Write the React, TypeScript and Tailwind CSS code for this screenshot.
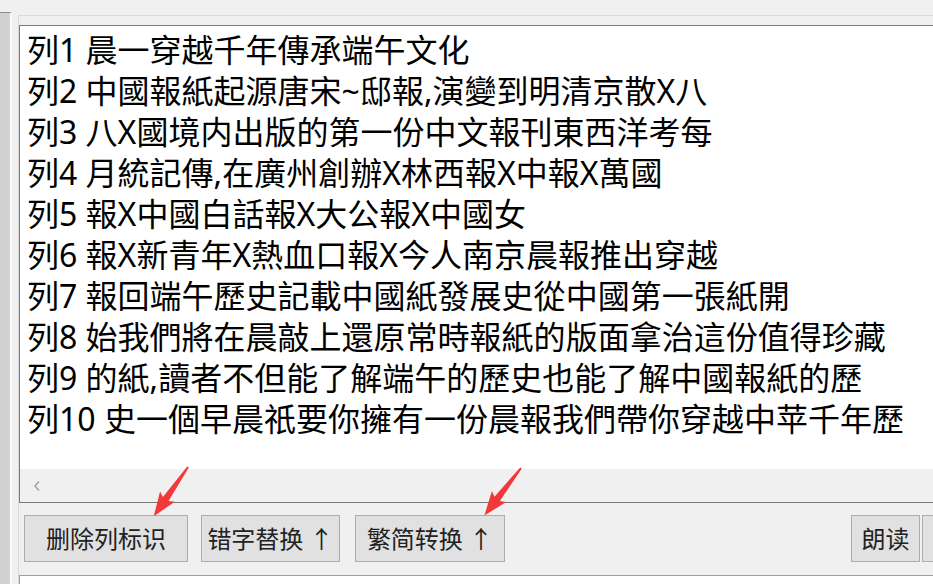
import React from 'react';

const lines = [
  '列1 晨一穿越千年傳承端午文化',
  '列2 中國報紙起源唐宋~邸報,演變到明清京散X八',
  '列3 八X國境内出版的第一份中文報刊東西洋考每',
  '列4 月統記傳,在廣州創辦X林西報X中報X萬國',
  '列5 報X中國白話報X大公報X中國女',
  '列6 報X新青年X熱血口報X今人南京晨報推出穿越',
  '列7 報回端午歷史記載中國紙發展史從中國第一張紙開',
  '列8 始我們將在晨敲上還原常時報紙的版面拿治這份值得珍藏',
  '列9 的紙,讀者不但能了解端午的歷史也能了解中國報紙的歷',
  '列10 史一個早晨祇要你擁有一份晨報我們帶你穿越中苹千年歷',
];

function Arrow({ x, y, angle }: { x: number; y: number; angle: number }) {
  return (
    <g transform={`translate(${x} ${y}) rotate(${angle})`}>
      <polygon
        points="0,-1 39,-3.4 36,-9 60,0 36,9 39,3.4 0,1"
        fill="#f2383b"
      />
    </g>
  );
}

export default function App() {
  return (
    <div className="relative w-[933px] h-[584px] overflow-hidden bg-[#f0f0f0] flex font-['Noto_Sans','Noto_Sans_CJK_SC',sans-serif]">
      {/* left splitter strip */}
      <div className="w-[12px] shrink-0 pt-[12px]">
        <div className="h-full border-t border-[#8c8c8c] bg-[#d2d2d2] border-r-2 border-r-[#f9f9f9]" />
      </div>

      <div className="flex-1 min-w-0 pl-[6px] pt-[15px] flex flex-col">
        <div className="flex-1 flex flex-col border-t border-l border-[#dadada] pt-[9px]">
          {/* text box */}
          <div className="h-[478px] shrink-0 flex flex-col border border-r-0 border-[#7a7a7a]">
            <div className="flex-1 bg-white pl-[7px] pt-[3px] overflow-hidden">
              {lines.map((l) => (
                <div key={l} className="text-[32px] leading-[41px] text-black whitespace-nowrap">
                  {l}
                </div>
              ))}
            </div>
            <div className="h-[33px] bg-[#f0f0f0] flex items-center pl-[13px]">
              <svg width="8" height="12" viewBox="0 0 8 12">
                <polyline points="6,1.5 2,6 6,10.5" fill="none" stroke="#a6a6a6" strokeWidth="1.6" />
              </svg>
            </div>
          </div>

          {/* button row */}
          <div className="h-[72px] shrink-0 flex items-center pl-[5px] pb-[1px] text-[24px] text-[#222]">
            <button className="w-[164px] h-[47px] shrink-0 border border-[#adadad] bg-[#e1e1e1]">删除列标识</button>
            <button className="ml-[13px] w-[139px] h-[47px] shrink-0 border border-[#adadad] bg-[#e1e1e1]">错字替换 ↑</button>
            <button className="ml-[15px] w-[150px] h-[47px] shrink-0 border border-[#adadad] bg-[#e1e1e1]">繁简转换 ↑</button>
            <button className="ml-[346px] w-[69px] h-[47px] shrink-0 border border-[#adadad] bg-[#e1e1e1]">朗读</button>
            <button className="ml-[2px] w-[69px] h-[47px] shrink-0 border border-[#adadad] bg-[#e1e1e1]">停止</button>
          </div>

          {/* lower box */}
          <div className="flex-1 bg-white border-t border-l border-[#a0a0a0]" />
        </div>
      </div>

      {/* red annotation arrows */}
      <svg className="absolute inset-0 pointer-events-none" width="933" height="584">
        <Arrow x={188} y={467} angle={124.8} />
        <Arrow x={521} y={468} angle={127.6} />
      </svg>
    </div>
  );
}
